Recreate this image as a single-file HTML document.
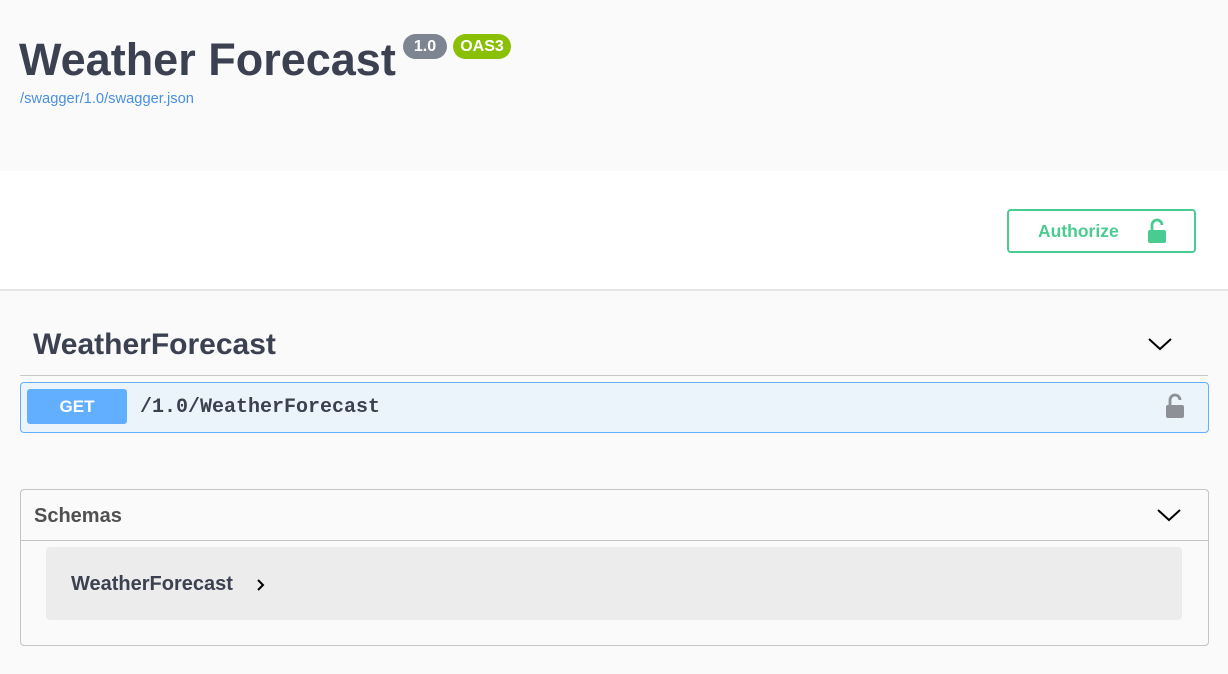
<!DOCTYPE html>
<html><head><style>
*{box-sizing:border-box;margin:0;padding:0}
body{width:1228px;height:674px;background:#fafafa;font-family:"Liberation Sans",sans-serif;position:relative;overflow:hidden;color:#3b4151}
.abs{position:absolute}
</style></head><body>
<div class="abs" style="left:0;top:0;width:1228px;height:171px;background:#fafafa"></div>
<div class="abs" style="left:19px;top:34px;font-size:45px;font-weight:bold;color:#3b4151;line-height:52px">Weather Forecast</div>
<div class="abs" style="left:403px;top:34px;width:44px;height:25px;border-radius:13px;background:#7d8492;color:#fff;font-weight:bold;font-size:16px;text-align:center;line-height:25px">1.0</div>
<div class="abs" style="left:453px;top:34px;width:58px;height:25px;border-radius:13px;background:#89bf04;color:#fff;font-weight:bold;font-size:16px;text-align:center;line-height:25px">OAS3</div>
<div class="abs" style="left:20px;top:91px;font-size:14.7px;color:#4990e2">/swagger/1.0/swagger.json</div>
<div class="abs" style="left:0;top:171px;width:1228px;height:120px;background:#fff;border-bottom:2px solid #e6e6e6"></div>
<div class="abs" style="left:1007px;top:209px;width:189px;height:44px;border:2px solid #49cc90;border-radius:4px;color:#49cc90;font-weight:bold;font-size:17.5px;line-height:41px;padding-left:29px">Authorize
<svg class="abs" style="left:138px;top:7px" width="20" height="26" viewBox="0 0 20 26"><path d="M5 12V7a5 5 0 0 1 10 0" fill="none" stroke="#49cc90" stroke-width="2.8"/><rect x="1" y="12" width="18" height="13" rx="2" fill="#49cc90"/></svg></div>
<div class="abs" style="left:33px;top:328px;font-size:30px;font-weight:bold;color:#3b4151">WeatherForecast</div>
<svg class="abs" style="left:1148px;top:336px" width="24" height="16" viewBox="0 0 24 16"><path d="M1 3l11 10L23 3" fill="none" stroke="#000" stroke-width="2"/></svg>
<div class="abs" style="left:20px;top:375px;width:1188px;height:1px;background:#c8c8c8"></div>
<div class="abs" style="left:20px;top:382px;width:1189px;height:51px;background:#ebf3fb;border:1px solid #61affe;border-radius:4px"></div>
<div class="abs" style="left:27px;top:389px;width:100px;height:35px;background:#61affe;border-radius:3px;color:#fff;font-weight:bold;font-size:17px;text-align:center;line-height:35px">GET</div>
<div class="abs" style="left:140px;top:396px;font-family:'Liberation Mono',monospace;font-weight:bold;font-size:20px;color:#3b4151">/1.0/WeatherForecast</div>
<svg class="abs" style="left:1165px;top:393px" width="20" height="26" viewBox="0 0 20 26"><path d="M5 12V7a5 5 0 0 1 10 0" fill="none" stroke="#8d9096" stroke-width="2.8"/><rect x="1" y="12" width="18" height="13" rx="2" fill="#8d9096"/></svg>
<div class="abs" style="left:20px;top:489px;width:1189px;height:157px;border:1px solid #c4c4c4;border-radius:4px"></div>
<div class="abs" style="left:20px;top:540px;width:1189px;height:1px;background:#c4c4c4"></div>
<div class="abs" style="left:34px;top:505px;font-size:20px;font-weight:bold;color:#505050">Schemas</div>
<svg class="abs" style="left:1157px;top:507px" width="24" height="16" viewBox="0 0 24 16"><path d="M1 3l11 10L23 3" fill="none" stroke="#000" stroke-width="2"/></svg>
<div class="abs" style="left:46px;top:547px;width:1136px;height:73px;background:#ececec;border-radius:4px"></div>
<div class="abs" style="left:71px;top:573px;font-size:20px;font-weight:bold;color:#3b4151">WeatherForecast</div>
<svg class="abs" style="left:256px;top:578px" width="10" height="14" viewBox="0 0 10 14"><path d="M2 2l5 5-5 5" fill="none" stroke="#000" stroke-width="2"/></svg>
</body></html>
